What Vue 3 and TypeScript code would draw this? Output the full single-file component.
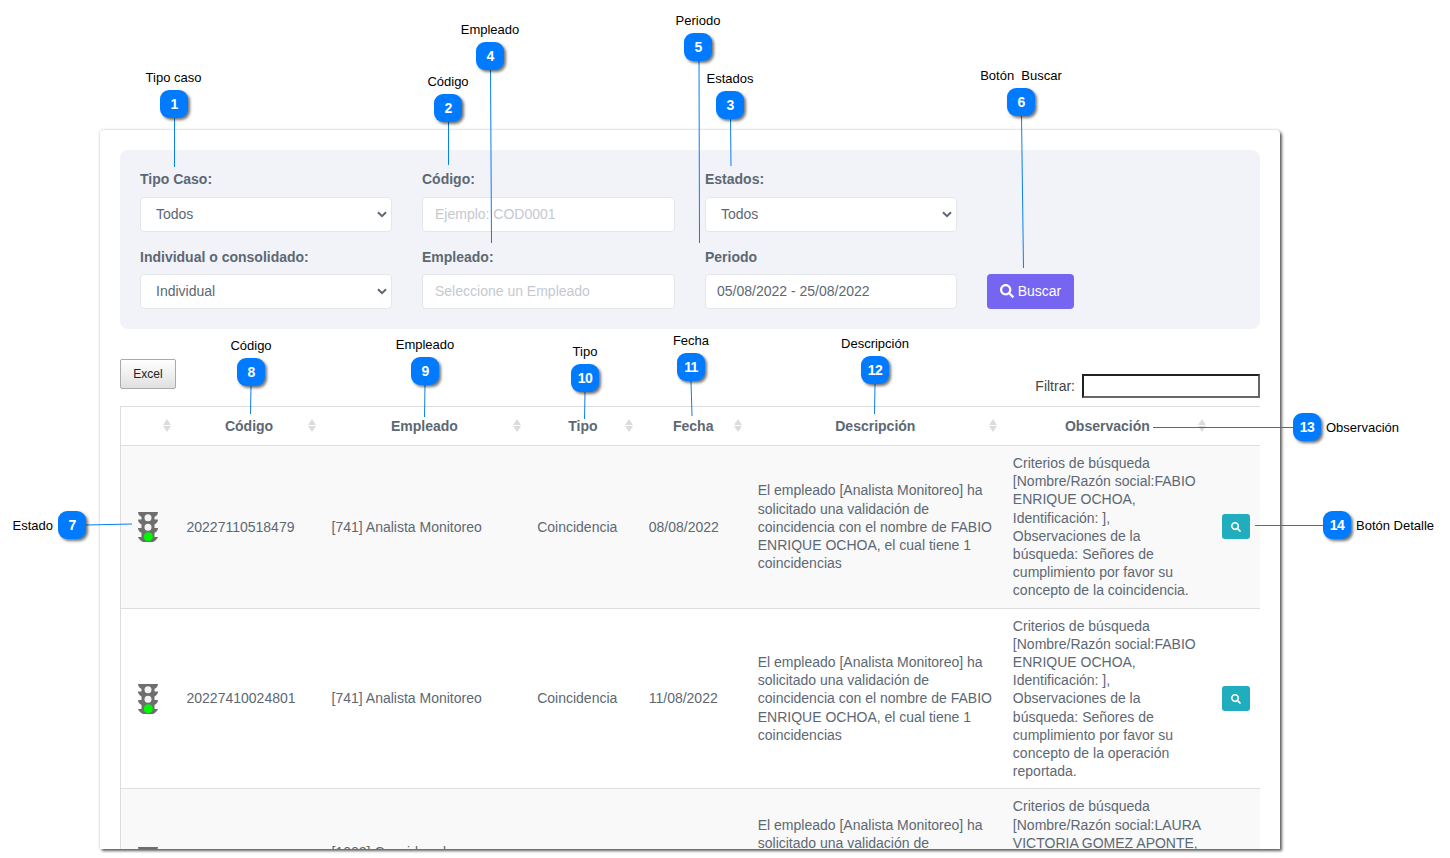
<script setup lang="ts">
interface Callout { n: number; x: number; y: number; label: string; lx: number; ly: number; side: 'center' | 'left' | 'right'; line: [number, number, number, number] }

const callouts: Callout[] = [
  { n: 1, x: 174, y: 104, label: 'Tipo caso', lx: 173.5, ly: 77, side: 'center', line: [174.5, 118, 174.5, 167] },
  { n: 2, x: 448, y: 108, label: 'Código', lx: 448, ly: 81, side: 'center', line: [448.5, 122, 448.5, 165] },
  { n: 3, x: 730, y: 105, label: 'Estados', lx: 730, ly: 78, side: 'center', line: [730.5, 119, 731, 166] },
  { n: 4, x: 490, y: 56, label: 'Empleado', lx: 490, ly: 29, side: 'center', line: [490.5, 70, 491.5, 243] },
  { n: 5, x: 698, y: 47, label: 'Periodo', lx: 698, ly: 20, side: 'center', line: [699, 61, 699.5, 243] },
  { n: 6, x: 1021, y: 102, label: 'Botón  Buscar', lx: 1021, ly: 75, side: 'center', line: [1021.5, 116, 1023.5, 268] },
  { n: 7, x: 72, y: 525, label: 'Estado', lx: 53, ly: 525, side: 'right', line: [86, 525, 132, 524] },
  { n: 8, x: 251, y: 372, label: 'Código', lx: 251, ly: 345, side: 'center', line: [251, 386, 250.5, 414] },
  { n: 9, x: 425, y: 371, label: 'Empleado', lx: 425, ly: 344, side: 'center', line: [425, 385, 424.5, 417] },
  { n: 10, x: 585, y: 378, label: 'Tipo', lx: 585, ly: 351, side: 'center', line: [585, 392, 584.5, 419] },
  { n: 11, x: 691, y: 367, label: 'Fecha', lx: 691, ly: 340, side: 'center', line: [691, 381, 692, 416] },
  { n: 12, x: 875, y: 370, label: 'Descripción', lx: 875, ly: 343, side: 'center', line: [875, 384, 874.5, 414] },
  { n: 13, x: 1307, y: 427, label: 'Observación', lx: 1326, ly: 427, side: 'left', line: [1293, 427.5, 1153, 427.5] },
  { n: 14, x: 1337, y: 525, label: 'Botón Detalle', lx: 1356, ly: 525, side: 'left', line: [1323, 525.5, 1255, 525.5] },
]

const badgeStyle = (c: Callout) => ({ left: `${c.x - 14}px`, top: `${c.y - 14}px` })
const labelStyle = (c: Callout) => ({
  left: `${c.lx}px`,
  top: `${c.ly}px`,
  transform: c.side === 'center' ? 'translate(-50%, -50%)' : c.side === 'right' ? 'translate(-100%, -50%)' : 'translateY(-50%)',
})

const columns = ['', 'Código', 'Empleado', 'Tipo', 'Fecha', 'Descripción', 'Observación']
const desc = (name: string) => `El empleado [Analista Monitoreo] ha solicitado una validación de coincidencia con el nombre de ${name}, el cual tiene 1 coincidencias`

const rows = [
  {
    code: '20227110518479', emp: '[741] Analista Monitoreo', tipo: 'Coincidencia', fecha: '08/08/2022',
    desc: desc('FABIO ENRIQUE OCHOA'),
    obs: 'Criterios de búsqueda [Nombre/Razón social:FABIO ENRIQUE OCHOA, Identificación: ], Observaciones de la búsqueda: Señores de cumplimiento por favor su concepto de la coincidencia.',
  },
  {
    code: '20227410024801', emp: '[741] Analista Monitoreo', tipo: 'Coincidencia', fecha: '11/08/2022',
    desc: desc('FABIO ENRIQUE OCHOA'),
    obs: 'Criterios de búsqueda [Nombre/Razón social:FABIO ENRIQUE OCHOA, Identificación: ], Observaciones de la búsqueda: Señores de cumplimiento por favor su concepto de la operación reportada.',
  },
  {
    code: '20227410024977', emp: '[1002] Considerado Monitoreo Analista', tipo: 'Coincidencia', fecha: '12/08/2022',
    desc: desc('LAURA VICTORIA GOMEZ'),
    obs: 'Criterios de búsqueda [Nombre/Razón social:LAURA VICTORIA GOMEZ APONTE, Identificación: ], Observaciones de la búsqueda: Señores de cumplimiento.',
  },
]

const searchPath = 'M505 442.7L405.3 343c-4.5-4.5-10.6-7-17-7H372c27.6-35.3 44-79.7 44-128C416 93.1 322.9 0 208 0S0 93.1 0 208s93.1 208 208 208c48.3 0 92.7-16.4 128-44v16.3c0 6.4 2.5 12.5 7 17l99.7 99.7c9.4 9.4 24.6 9.4 33.9 0l28.3-28.3c9.4-9.4 9.4-24.6.1-34zM208 336c-70.7 0-128-57.2-128-128 0-70.7 57.2-128 128-128 70.7 0 128 57.2 128 128 0 70.7-57.2 128-128 128z'
</script>

<template>
  <div class="page">
    <main class="card">
      <section class="filters">
        <div class="field">
          <label>Tipo Caso:</label>
          <select class="control select"><option>Todos</option></select>
        </div>
        <div class="field">
          <label>Código:</label>
          <input class="control" placeholder="Ejemplo: COD0001" />
        </div>
        <div class="field">
          <label>Estados:</label>
          <select class="control select"><option>Todos</option></select>
        </div>
        <div class="field"></div>
        <div class="field">
          <label>Individual o consolidado:</label>
          <select class="control select"><option>Individual</option></select>
        </div>
        <div class="field">
          <label>Empleado:</label>
          <input class="control" placeholder="Seleccione un Empleado" />
        </div>
        <div class="field">
          <label>Periodo</label>
          <input class="control date" value="05/08/2022 - 25/08/2022" />
        </div>
        <div class="field end">
          <button class="buscar" type="button">
            <svg viewBox="0 0 512 512" width="14" height="14"><path :d="searchPath" fill="currentColor" /></svg>
            Buscar
          </button>
        </div>
      </section>

      <div class="tools">
        <button class="excel" type="button">Excel</button>
        <div class="filter">
          <span>Filtrar:</span>
          <input class="filter-input" />
        </div>
      </div>

      <table class="grid">
        <colgroup>
          <col class="c0" /><col class="c1" /><col class="c2" /><col class="c3" />
          <col class="c4" /><col class="c5" /><col class="c6" /><col class="c7" />
        </colgroup>
        <thead>
          <tr>
            <th v-for="c in columns" :key="c">
              {{ c }}
              <span class="sort"><i class="up"></i><i class="down"></i></span>
            </th>
            <th class="nosort"></th>
          </tr>
        </thead>
        <tbody>
          <tr v-for="r in rows" :key="r.code">
            <td class="light">
              <svg viewBox="0 0 24 31" width="24" height="31">
                <path d="M2 1h20c0 2-1.500 4-3.500 5v2.500H22c0 2-1.500 4-3.500 5V17H22c0 2-1.500 4-3.500 5v4c1 0 2.500 0 3.500 0-1 2.500-3 4-5 5H7c-2-1-4-2.500-5-5 1 0 2.500 0 3.500 0v-4C3.500 21 2 19 2 17h3.500v-3.500C3.500 12.500 2 10.500 2 8.500h3.500V6C3.500 5 2 3 2 1z" fill="#6e6e6e" />
                <circle cx="12" cy="6.800" r="3.500" fill="#f4f4f4" />
                <circle cx="12" cy="16.300" r="3.500" fill="#f4f4f4" />
                <circle cx="12.300" cy="25.800" r="4.500" fill="#00f800" />
              </svg>
            </td>
            <td>{{ r.code }}</td>
            <td>{{ r.emp }}</td>
            <td>{{ r.tipo }}</td>
            <td>{{ r.fecha }}</td>
            <td>{{ r.desc }}</td>
            <td>{{ r.obs }}</td>
            <td class="action">
              <button class="detail" type="button" aria-label="Detalle">
                <svg viewBox="0 0 512 512" width="10" height="10"><path :d="searchPath" fill="currentColor" /></svg>
              </button>
            </td>
          </tr>
        </tbody>
      </table>
    </main>

    <svg class="lines" width="1450" height="858">
      <line
        v-for="c in callouts"
        :key="c.n"
        :x1="c.line[0]" :y1="c.line[1]" :x2="c.line[2]" :y2="c.line[3]"
      />
    </svg>
    <template v-for="c in callouts" :key="c.n">
      <div class="badge" :style="badgeStyle(c)">{{ c.n }}</div>
      <div class="tag" :style="labelStyle(c)">{{ c.label }}</div>
    </template>
  </div>
</template>

<style scoped>
.page {
  position: relative;
  width: 1450px;
  height: 858px;
  overflow: hidden;
  padding: 130px 0 0 100px;
  box-sizing: border-box;
  background: #fff;
  font-family: "Liberation Sans", Arial, sans-serif;
}
.card {
  box-sizing: border-box;
  width: 1180px;
  height: 719px;
  padding: 20px;
  overflow: hidden;
  background: #fff;
  border-radius: 4px 4px 0 0;
  box-shadow: 2px 2px 3px rgba(0, 0, 0, 0.6), 0 0 3px rgba(0, 0, 0, 0.22);
}
.filters {
  box-sizing: border-box;
  height: 179px;
  padding: 19px 20px 0;
  background: #f2f3f8;
  border-radius: 8px;
  display: grid;
  grid-template-columns: 252px 253px 252px 1fr;
  align-content: start;
  row-gap: 15px;
  column-gap: 30px;
}
.field { display: flex; flex-direction: column; }
.field.end { justify-content: flex-end; }
.field label {
  font-size: 14px;
  line-height: 21px;
  font-weight: 700;
  color: #5c6873;
  margin-bottom: 7px;
}
.field:nth-child(n+5) label { margin-bottom: 6px; }
.control {
  box-sizing: border-box;
  width: 100%;
  height: 35px;
  border: 1px solid #e4e7ea;
  border-radius: 4px;
  background: #fff;
  color: #5c6873;
  font: 14px "Liberation Sans", Arial, sans-serif;
  padding: 0 12px 1px;
  outline: none;
}
.control::placeholder { color: #c4c9d0; opacity: 1; }
.date { padding-left: 11px; }
.select {
  appearance: none;
  padding-left: 15px;
  background: #fff url("data:image/svg+xml,%3Csvg xmlns='http://www.w3.org/2000/svg' width='10' height='7' viewBox='0 0 10 7'%3E%3Cpath d='M1 1.200l4 4 4-4' fill='none' stroke='%235c6873' stroke-width='2'/%3E%3C/svg%3E") no-repeat right 4px center;
}
.buscar {
  align-self: flex-start;
  width: 87px;
  height: 35px;
  border: 0;
  border-radius: 4px;
  background: #7565f0;
  color: #fff;
  font: 14px "Liberation Sans", Arial, sans-serif;
  display: flex;
  align-items: center;
  justify-content: center;
  gap: 4px;
  padding: 0 0 1px;
}
.tools {
  height: 77px;
  display: flex;
  justify-content: space-between;
  align-items: flex-start;
  padding-top: 30px;
  box-sizing: border-box;
}
.excel {
  width: 56px;
  height: 30px;
  border: 1px solid #aaa;
  border-radius: 2px;
  background: linear-gradient(to bottom, #fff 0%, #e0e0e0 100%);
  color: #222;
  font: 12px "Liberation Sans", Arial, sans-serif;
  padding: 0;
}
.filter {
  display: flex;
  align-items: center;
  gap: 7px;
  margin-top: 15px;
  font-size: 14px;
  color: #444;
}
.filter-input {
  box-sizing: border-box;
  width: 178px;
  height: 24px;
  border: 2px solid;
  border-color: #222 #666 #666 #222;
  padding: 0;
  outline: none;
}
.grid {
  width: 1140px;
  table-layout: fixed;
  border-collapse: collapse;
  font-size: 14px;
  line-height: 18.2px;
  color: #5c6873;
  border-top: 1px solid #ddd;
  border-left: 1px solid #ddd;
}
.c0 { width: 55px; }
.c1 { width: 145px; }
.c2 { width: 205.5px; }
.c3 { width: 111.5px; }
.c4 { width: 109px; }
.c5 { width: 255px; }
.c6 { width: 209px; }
.c7 { width: 49px; }
th {
  position: relative;
  height: 39px;
  box-sizing: border-box;
  padding: 0 8px 0 10px;
  text-align: center;
  font-weight: 700;
  border-bottom: 1px solid #ddd;
}
.sort {
  position: absolute;
  right: 5px;
  top: 12px;
  display: flex;
  flex-direction: column;
  gap: 1px;
}
.sort i {
  width: 0;
  height: 0;
  border-left: 4.5px solid transparent;
  border-right: 4.5px solid transparent;
}
.sort .up { border-bottom: 6px solid #dcdcdc; }
.sort .down { border-top: 6px solid #dcdcdc; }
.nosort .sort { display: none; }
td {
  padding: 8px 7px 8px 11px;
  vertical-align: middle;
  border-bottom: 1px solid #ddd;
}
tbody tr:nth-child(odd) { background: #f9f9f9; }
td.light { padding: 0 0 0 15px; }
.light svg { display: block; }
td.action { padding: 0 10px 0 11px; }
.detail {
  display: flex;
  align-items: center;
  justify-content: center;
  width: 28px;
  height: 25px;
  padding: 0;
  border: 0;
  border-radius: 3px;
  background: #20aebf;
  color: #fff;
}
.lines {
  position: absolute;
  left: 0;
  top: 0;
  pointer-events: none;
}
.lines line { stroke: #0a7df5; stroke-width: 1; }
.badge {
  position: absolute;
  box-sizing: border-box;
  width: 28px;
  height: 28px;
  border-radius: 9px;
  background: #007bff;
  color: #fff;
  font-size: 14px;
  font-weight: 700;
  letter-spacing: -0.6px;
  line-height: 28px;
  text-align: center;
  box-shadow: 2px 2px 3px rgba(0, 0, 0, 0.55);
}
.tag {
  position: absolute;
  margin-top: 1px;
  font-size: 13px;
  line-height: 16px;
  color: #000;
  white-space: pre;
}
</style>
